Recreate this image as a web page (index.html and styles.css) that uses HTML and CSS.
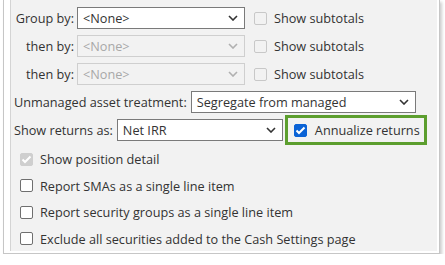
FILE: index.html
```html
<!DOCTYPE html>
<html lang="en">

<head>
    <meta charset="UTF-8">
    <meta name="viewport" content="width=device-width, initial-scale=1.0">
    <title>Report options</title>
    <link rel="stylesheet" href="styles.css">
</head>

<body>
    <div class="frame">
        <div class="panel">

            <div class="row">
                <span class="label">Group by:</span>
                <div class="select group-select">
                    <span>&lt;None&gt;</span>
                    <svg class="chevron" width="10" height="6" viewBox="0 0 10 6"><path d="M1 1 L5 5 L9 1" /></svg>
                </div>
                <span class="check disabled"></span>
                <span class="check-text">Show subtotals</span>
            </div>

            <div class="row">
                <span class="label">then by:</span>
                <div class="select group-select off">
                    <span>&lt;None&gt;</span>
                    <svg class="chevron" width="10" height="6" viewBox="0 0 10 6"><path d="M1 1 L5 5 L9 1" /></svg>
                </div>
                <span class="check disabled"></span>
                <span class="check-text">Show subtotals</span>
            </div>

            <div class="row">
                <span class="label">then by:</span>
                <div class="select group-select off">
                    <span>&lt;None&gt;</span>
                    <svg class="chevron" width="10" height="6" viewBox="0 0 10 6"><path d="M1 1 L5 5 L9 1" /></svg>
                </div>
                <span class="check disabled"></span>
                <span class="check-text">Show subtotals</span>
            </div>

            <div class="row">
                <span class="plain-label">Unmanaged asset treatment:</span>
                <div class="select asset-select">
                    <span>Segregate from managed</span>
                    <svg class="chevron" width="10" height="6" viewBox="0 0 10 6"><path d="M1 1 L5 5 L9 1" /></svg>
                </div>
            </div>

            <div class="row">
                <span class="plain-label">Show returns as:</span>
                <div class="select returns-select">
                    <span>Net IRR</span>
                    <svg class="chevron" width="10" height="6" viewBox="0 0 10 6"><path d="M1 1 L5 5 L9 1" /></svg>
                </div>
                <div class="highlight">
                    <span class="check checked">
                        <svg width="11" height="9" viewBox="0 0 11 9"><path d="M1.5 4.5 L4 7 L9.5 1.5" /></svg>
                    </span>
                    <span class="check-text">Annualize returns</span>
                </div>
            </div>

            <div class="options">
                <div class="option">
                    <span class="check checked disabled">
                        <svg width="11" height="9" viewBox="0 0 11 9"><path d="M1.5 4.5 L4 7 L9.5 1.5" /></svg>
                    </span>
                    <span class="check-text">Show position detail</span>
                </div>
                <div class="option">
                    <span class="check"></span>
                    <span class="check-text">Report SMAs as a single line item</span>
                </div>
                <div class="option">
                    <span class="check"></span>
                    <span class="check-text">Report security groups as a single line item</span>
                </div>
                <div class="option">
                    <span class="check"></span>
                    <span class="check-text">Exclude all securities added to the Cash Settings page</span>
                </div>
            </div>

        </div>
    </div>
</body>

</html>
```

FILE: styles.css
```css
body {
    margin: 0;
    background-color: #fff;
    font-family: "Open Sans", "Noto Sans", sans-serif;
    font-size: 12.7px;
    color: #333;
}

.frame {
    width: 427px;
    margin-left: 3px;
    padding: 0 2px 2px 6px;
    border: 1px solid #c6c6c6;
    border-top: none;
    box-shadow: 2px 2px 3px rgba(0, 0, 0, 0.2);
}

.panel {
    background-color: #f2f2f2;
    border-left: 1px solid #d4d4d4;
    padding: 4px 0 0 3px;
    height: 251px;
    box-sizing: border-box;
}

.row {
    display: flex;
    align-items: center;
    height: 28px;
}

.label {
    width: 60px;
    text-align: right;
    margin-right: 3px;
}

.plain-label {
    margin-right: 4px;
}

/* dropdowns */
.select {
    display: flex;
    align-items: center;
    justify-content: space-between;
    height: 22px;
    box-sizing: border-box;
    padding: 0 6px 0 5px;
    background-color: #fff;
    border: 1px solid #7a7a7a;
}

.select .chevron path {
    fill: none;
    stroke: #333;
    stroke-width: 1.6;
}

.select.off {
    background-color: #f2f2f2;
    border-color: #cfcfcf;
    color: #a8a8a8;
}

.select.off .chevron path {
    stroke: #b0b0b0;
}

.group-select {
    width: 168px;
}

.asset-select {
    width: 225px;
}

.returns-select {
    width: 166px;
}

/* checkboxes */
.check {
    display: inline-flex;
    align-items: center;
    justify-content: center;
    width: 13px;
    height: 13px;
    box-sizing: border-box;
    border: 1px solid #6f6f6f;
    border-radius: 2px;
    background-color: #fff;
}

.check svg path {
    fill: none;
    stroke: #fff;
    stroke-width: 2;
}

.row > .check {
    margin-left: 9px;
    margin-right: 7px;
}

.check.disabled {
    border-color: #c8c8c8;
    background-color: #f2f2f2;
}

.check.checked {
    background-color: #0b63d6;
    border-color: #0b63d6;
}

.check.checked.disabled {
    background-color: #cfcfcf;
    border-color: #cfcfcf;
}

.highlight {
    display: flex;
    align-items: center;
    margin-left: 2px;
    height: 30px;
    width: 142px;
    box-sizing: border-box;
    border: 3px solid #5c9e2e;
    padding-left: 6px;
}

.highlight .check {
    margin-right: 8px;
}

.options {
    margin-top: 2px;
}

.option {
    display: flex;
    align-items: center;
    height: 26.5px;
    padding-left: 6px;
}

.option .check {
    margin-right: 7px;
}
```
